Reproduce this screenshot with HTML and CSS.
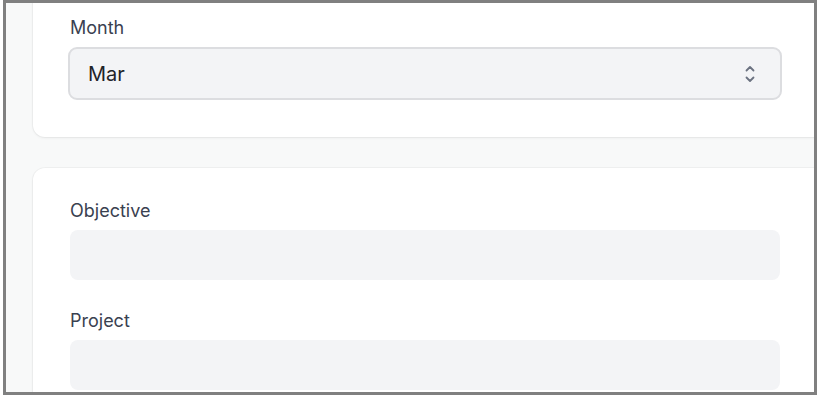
FILE: index.html
```html
<!DOCTYPE html>
<html lang="en">
<head>
    <meta charset="UTF-8">
    <meta name="viewport" content="width=device-width, initial-scale=1">
    <title>Goal</title>
    <link rel="stylesheet" href="styles.css">
</head>
<body>
    <div class="frame">
        <div class="page">
            <div class="card">
                <label class="field-label" for="month">Month</label>
                <div class="select">
                    <span id="month">Mar</span>
                    <svg class="chevrons" width="12" height="18" viewBox="0 0 12 18" fill="none" stroke="#6b7280" stroke-width="1.8" stroke-linecap="round" stroke-linejoin="round">
                        <path d="M2.5 5.5 L6 2 L9.5 5.5"/>
                        <path d="M2.5 12.5 L6 16 L9.5 12.5"/>
                    </svg>
                </div>
            </div>
            <div class="card">
                <label class="field-label">Objective</label>
                <div class="input"></div>
                <label class="field-label gap">Project</label>
                <div class="input"></div>
            </div>
        </div>
    </div>
</body>
</html>
```

FILE: styles.css
```css
body { margin: 0; background: #fff; font-family: Inter, "Noto Sans", sans-serif; }
.frame { margin-left: 3px; width: 808px; height: 389px; border: 3px solid #808080; overflow: hidden; background: #f8f9f9; }
.page { padding-left: 27px; margin-top: -18px; }
.card { background: #fff; border-radius: 12px; box-shadow: 0 1px 3px #0000000f, 0 0 0 1px #00000008; padding: 30px 80px 37px 37px; width: 710px; margin-bottom: 31px; }
.field-label { display: block; font-size: 18px; line-height: 24px; padding-top: 1px; color: #3a4150; margin-bottom: 7px; }
.field-label.gap { margin-top: 28px; }
.select { display: flex; align-items: center; justify-content: space-between; height: 53px; box-sizing: border-box; margin: 0 -2px; width: 714px; padding: 0 24px 0 18px; background: #f3f4f6; border: 2px solid #dcdde0; border-radius: 9px; font-size: 20px; color: #1f2328; }
.chevrons { display: block; }
.input { height: 50px; background: #f3f4f6; border-radius: 8px; }
```
